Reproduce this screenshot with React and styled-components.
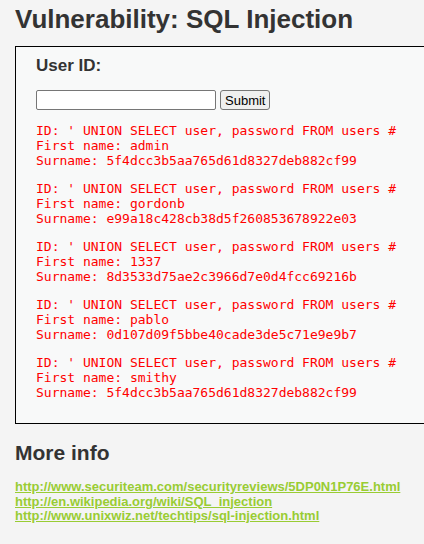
import styled, { createGlobalStyle } from "styled-components";

const GlobalStyle = createGlobalStyle`
  html, body {
    margin: 0;
    background: #f4f4f4;
    overflow: hidden;
  }
`;

const Page = styled.div`
  padding: 0 0 0 15px;
  font-family: "Liberation Sans", Arial, sans-serif;
  color: #333333;
`;

const Title = styled.h1`
  margin: 0;
  padding-top: 4px;
  font-size: 26px;
  line-height: 30px;
  font-weight: bold;
`;

const Panel = styled.div`
  margin-top: 12px;
  width: 430px;
  box-sizing: border-box;
  border: 1px solid #000;
  background: #f8f9f9;
  padding: 8px 20px 10px 20px;
`;

const Label = styled.h3`
  margin: 0 0 13px 0;
  font-size: 17px;
  line-height: 22px;
  font-weight: bold;
`;

const Form = styled.form`
  display: flex;
  gap: 4px;
  align-items: center;
  margin-bottom: 10px;
`;

const TextInput = styled.input`
  width: 180px;
  height: 20px;
  box-sizing: border-box;
  border: 1px solid #767676;
  border-radius: 2px;
  background: #fff;
  padding: 1px 2px;
`;

const Button = styled.button`
  height: 20px;
  box-sizing: border-box;
  padding: 0 4px;
  font-family: "Liberation Sans", Arial, sans-serif;
  font-size: 13px;
  color: #000;
  background: #efefef;
  border: 1px solid #767676;
  border-radius: 3px;
`;

const Result = styled.pre`
  margin: 13px 0;
  font-family: "DejaVu Sans Mono", monospace;
  font-size: 13px;
  line-height: 15px;
  color: red;
`;

const SubTitle = styled.h2`
  margin: 16px 0 0 0;
  font-size: 21px;
  line-height: 26px;
  font-weight: bold;
`;

const Links = styled.ul`
  list-style: none;
  margin: 14px 0 0 0;
  padding: 0;
`;

const Link = styled.a`
  display: block;
  font-size: 13px;
  line-height: 14.5px;
  font-weight: bold;
  color: #99cc33;
  text-decoration: underline;
`;

const rows = [
  ["admin", "5f4dcc3b5aa765d61d8327deb882cf99"],
  ["gordonb", "e99a18c428cb38d5f260853678922e03"],
  ["1337", "8d3533d75ae2c3966d7e0d4fcc69216b"],
  ["pablo", "0d107d09f5bbe40cade3de5c71e9e9b7"],
  ["smithy", "5f4dcc3b5aa765d61d8327deb882cf99"],
];

const links = [
  "http://www.securiteam.com/securityreviews/5DP0N1P76E.html",
  "http://en.wikipedia.org/wiki/SQL_injection",
  "http://www.unixwiz.net/techtips/sql-injection.html",
];

export default function App() {
  return (
    <Page>
      <GlobalStyle />
      <Title>Vulnerability: SQL Injection</Title>
      <Panel>
        <Label>User ID:</Label>
        <Form onSubmit={(e) => e.preventDefault()}>
          <TextInput type="text" name="id" />
          <Button type="submit">Submit</Button>
        </Form>
        {rows.map(([first, sur], i) => (
          <Result key={i}>
            {"ID: ' UNION SELECT user, password FROM users #"}
            <br />
            {"First name: " + first}
            <br />
            {"Surname: " + sur}
          </Result>
        ))}
      </Panel>
      <SubTitle>More info</SubTitle>
      <Links>
        {links.map((l) => (
          <li key={l}>
            <Link href={l}>{l}</Link>
          </li>
        ))}
      </Links>
    </Page>
  );
}
